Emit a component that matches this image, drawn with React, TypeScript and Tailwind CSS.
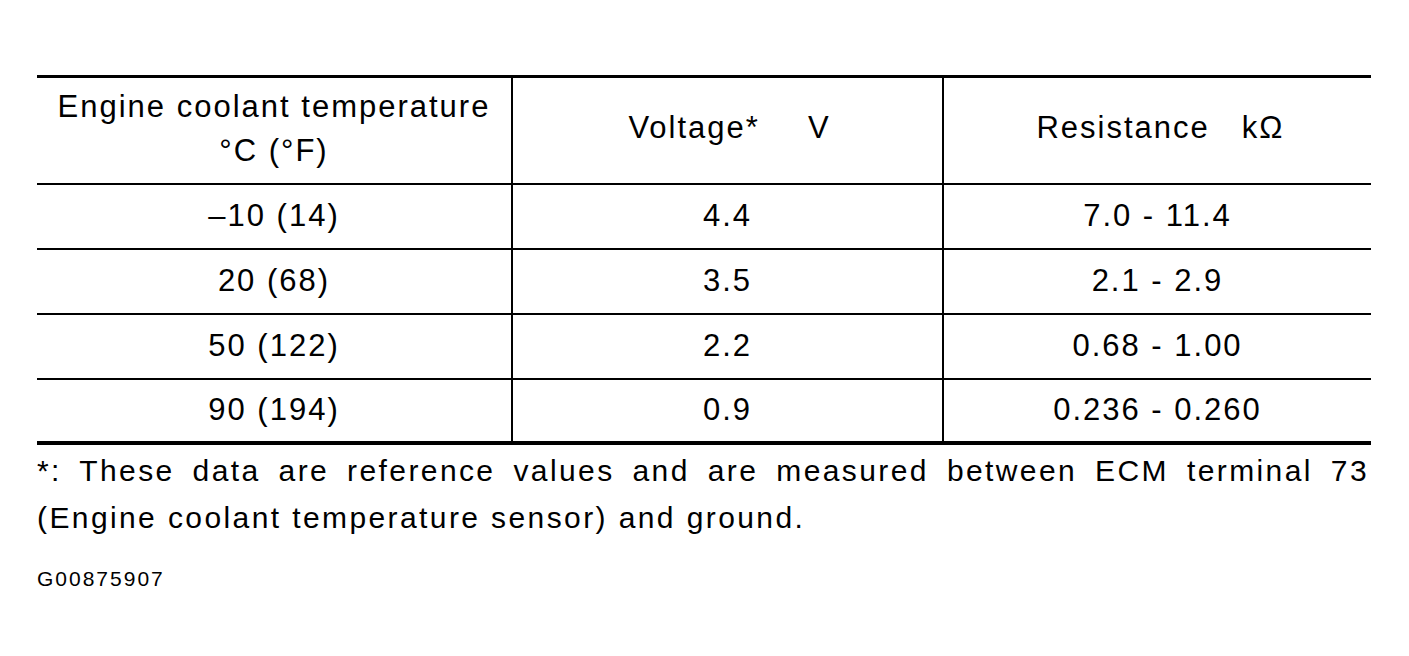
const rows = [
  ["–10 (14)", "4.4", "7.0 - 11.4"],
  ["20 (68)", "3.5", "2.1 - 2.9"],
  ["50 (122)", "2.2", "0.68 - 1.00"],
  ["90 (194)", "0.9", "0.236 - 0.260"],
];

export default function App() {
  return (
    <div
      className="w-[1409px] h-[656px] bg-white text-black"
      style={{ fontFamily: '"Liberation Sans", Arial, sans-serif' }}
    >
      <div className="pl-[37px] pt-[75px] w-[1371px]">
        <div className="border-t-[3px] border-black">
          <div className="grid grid-cols-[474px_431px_429px] h-[107px] border-b-2 border-black text-[31px] tracking-[2px] leading-[44px]">
            <div className="flex flex-col items-center justify-center pb-[4px]">
              <span>Engine coolant temperature</span>
              <span>°C (°F)</span>
            </div>
            <div className="flex items-center justify-center border-l-2 border-black pb-[6px] pl-[4px]">
              <span>
                Voltage*<span className="inline-block w-[48px]" />V
              </span>
            </div>
            <div className="flex items-center justify-center border-l-2 border-black pb-[6px] pl-[6px]">
              <span>
                Resistance<span className="inline-block w-[32px]" />kΩ
              </span>
            </div>
          </div>
          {rows.map((r, i) => (
            <div
              key={i}
              className={`grid grid-cols-[474px_431px_429px] text-[31px] tracking-[2px] ${
                i === rows.length - 1 ? "h-[65px] border-b-4" : "h-[65px] border-b-2"
              } border-black`}
            >
              <div className="flex items-center justify-center">{r[0]}</div>
              <div className="flex items-center justify-center border-l-2 border-black">{r[1]}</div>
              <div className="flex items-center justify-center border-l-2 border-black">{r[2]}</div>
            </div>
          ))}
        </div>
        <div className="mt-[2px] w-[1332px] text-[30px] tracking-[2.4px] leading-[47px]">
          <p className="text-justify [text-align-last:justify]">
            *: These data are reference values and are measured between ECM terminal 73
          </p>
          <p>(Engine coolant temperature sensor) and ground.</p>
        </div>
        <p className="mt-[26px] text-[21px] tracking-[2px] leading-[24px]">G00875907</p>
      </div>
    </div>
  );
}
